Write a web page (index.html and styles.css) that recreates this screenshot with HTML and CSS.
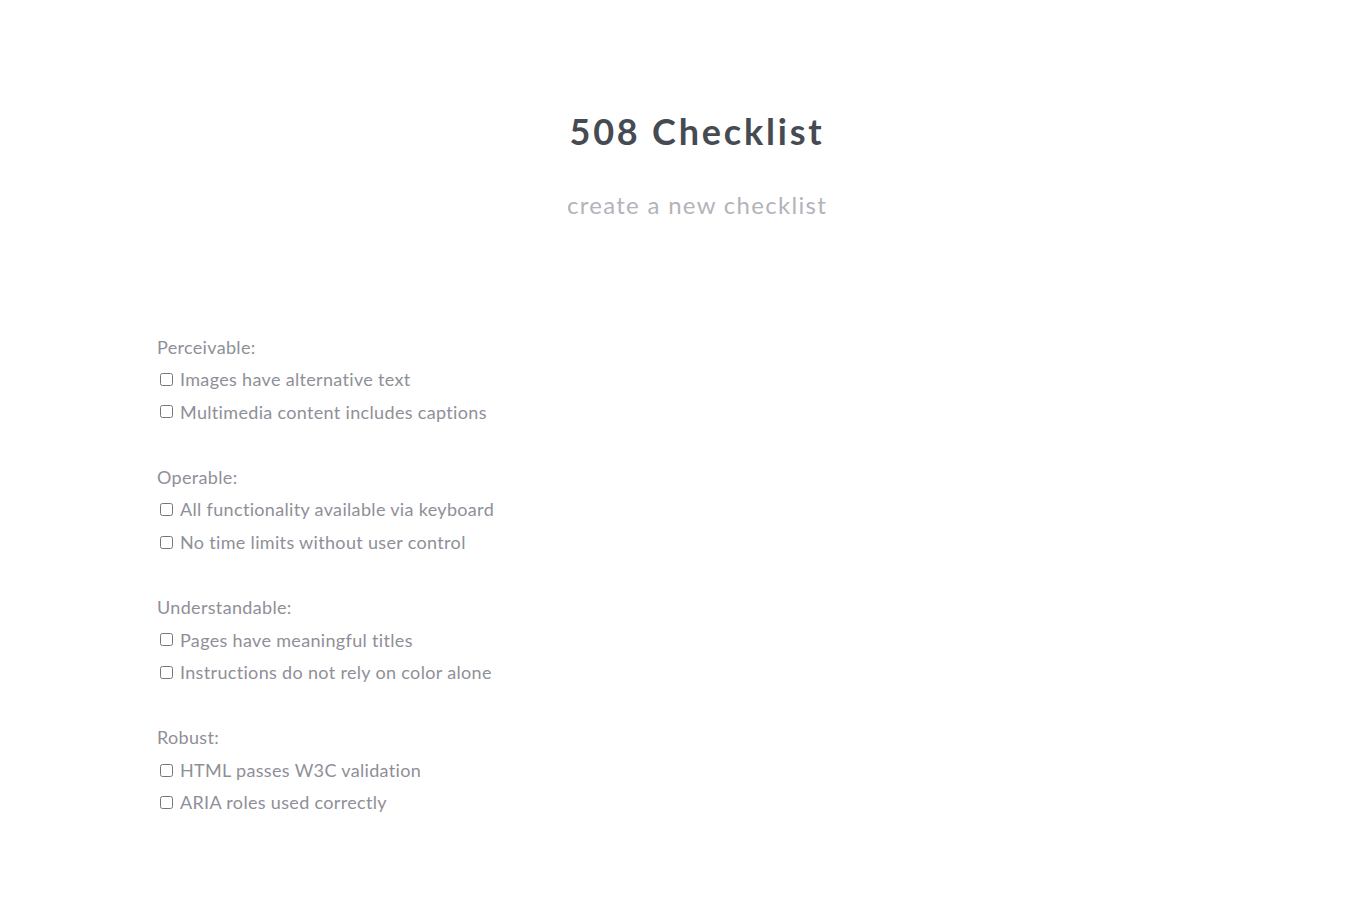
FILE: index.html
```html
<!DOCTYPE html>
<html>
<head>
<meta charset="utf-8">
<title>508 Checklist</title>
<link rel="stylesheet" href="styles.css">
</head>
<body>
<main class="page">
  <header class="hero">
    <h1 class="title">508 Checklist</h1>
    <p class="subtitle">create a new checklist</p>
  </header>
  <section class="checklist">
    <div class="group">
      <div class="group-title">Perceivable:</div>
      <label class="item"><input type="checkbox"> Images have alternative text</label>
      <label class="item"><input type="checkbox"> Multimedia content includes captions</label>
    </div>
    <div class="group">
      <div class="group-title">Operable:</div>
      <label class="item"><input type="checkbox"> All functionality available via keyboard</label>
      <label class="item"><input type="checkbox"> No time limits without user control</label>
    </div>
    <div class="group">
      <div class="group-title">Understandable:</div>
      <label class="item"><input type="checkbox"> Pages have meaningful titles</label>
      <label class="item"><input type="checkbox"> Instructions do not rely on color alone</label>
    </div>
    <div class="group">
      <div class="group-title">Robust:</div>
      <label class="item"><input type="checkbox"> HTML passes W3C validation</label>
      <label class="item"><input type="checkbox"> ARIA roles used correctly</label>
    </div>
  </section>
</main>
</body>
</html>
```
FILE: styles.css
```css
html, body {
  margin: 0;
  padding: 0;
  background: #ffffff;
}
body {
  font-family: Lato, "Open Sans", sans-serif;
}
.page {
  margin-left: 157px;
  width: 1080px;
  padding-top: 109px;
}
.hero {
  text-align: center;
}
.title {
  margin: 0;
  font-size: 36px;
  line-height: 44px;
  font-weight: 700;
  letter-spacing: 2.8px;
  color: #464a52;
}
.subtitle {
  margin: 37px 0 0;
  font-size: 24px;
  line-height: 30px;
  letter-spacing: 1.3px;
  color: #b3b3ba;
}
.checklist {
  margin-top: 110.5px;
  font-size: 18px;
  letter-spacing: 0.33px;
  color: #8f8f98;
}
.group {
  display: flex;
  flex-direction: column;
  padding-bottom: 32.57px;
}
.group-title,
.item {
  line-height: 32.57px;
  height: 32.57px;
}
.item {
  display: flex;
  align-items: center;
}
.item input {
  width: 13px;
  height: 13px;
  margin: 0 7px 0 3px;
}
```
